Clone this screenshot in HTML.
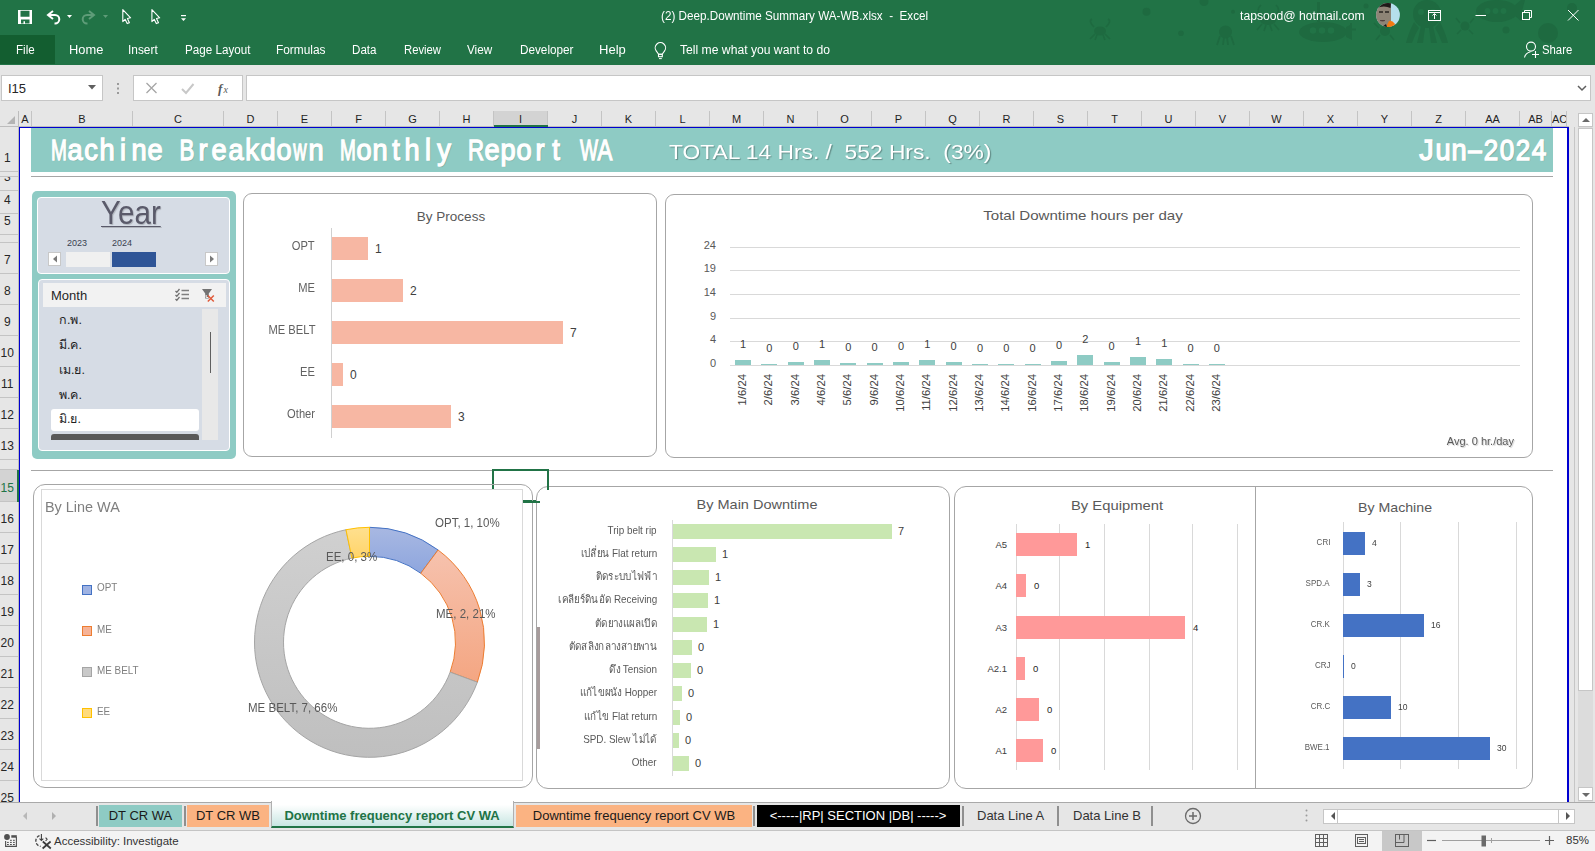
<!DOCTYPE html>
<html><head><meta charset="utf-8">
<style>
*{margin:0;padding:0;box-sizing:border-box}
html,body{width:1595px;height:851px;overflow:hidden;background:#fff;font-family:"Liberation Sans",sans-serif;position:relative}
.a{position:absolute}
.t{position:absolute;white-space:nowrap;line-height:1}
.tab{position:absolute;top:43.6px;font-size:12.5px;color:#fff;white-space:nowrap;line-height:1;transform:scaleX(0.92);transform-origin:0 0}
.ch{position:absolute;top:111px;height:16px;border-right:1px solid #c4c4c4;font-size:11px;color:#262626;text-align:center;line-height:17px;overflow:hidden}
.rh{position:absolute;left:0;width:18px;border-bottom:1px solid #c4c4c4;font-size:11px;color:#262626;text-align:center;overflow:hidden}
.lbl{position:absolute;white-space:nowrap;line-height:1;color:#595959}
</style></head><body>

<div class="a" style="left:0;top:0;width:1595px;height:65px;background:#217346"></div>
<svg class="a" style="left:1080px;top:0" width="515" height="65" viewBox="1080 0 515 65">
<g fill="#1e6a40" stroke="none">
<ellipse cx="1100" cy="31" rx="6" ry="4.5"/><path d="M1094 27 q-6 -6 -2 -8 M1106 27 q6 -6 2 -8 M1095 34 l-5 5 M1105 34 l5 5 M1097 35 l-2 5 M1103 35 l2 5" stroke="#1e6a40" stroke-width="1.6" fill="none"/>
<circle cx="1146.5" cy="11.7" r="4"/><circle cx="1204" cy="1.5" r="4.5"/><circle cx="1181" cy="33.3" r="2.8"/><circle cx="1233" cy="11.7" r="2"/>
<circle cx="1225.5" cy="32" r="6.5"/><path d="M1220 36 l-3 9 M1224 37 l-1 8 M1227 37 l1 8 M1231 36 l3 9" stroke="#1e6a40" stroke-width="1.8" fill="none"/>
<ellipse cx="1268" cy="20" rx="8" ry="5"/><path d="M1260 17 q-4 -8 1 -12 M1276 17 q5 -8 0 -12 M1262 24 l-5 6 M1274 24 l5 6 M1266 25 l-2 6 M1270 25 l2 6" stroke="#1e6a40" stroke-width="1.6" fill="none"/>
<ellipse cx="1323" cy="32" rx="24" ry="10"/><path d="M1317 22 v-20 h3 v20z"/><path d="M1346 27 v10 l6 3 v-16z"/><path d="M1351 23 v13 M1346 29.5 h10" stroke="#1e6a40" stroke-width="2" fill="none"/>
<circle cx="1385" cy="31" r="5"/><path d="M1379 28 l-5 -5 M1391 28 l5 -5 M1380 35 l-4 5 M1390 35 l4 5" stroke="#1e6a40" stroke-width="1.6" fill="none"/>
<circle cx="1427" cy="14" r="14"/><path d="M1414 22 q-6 12 -8 21 h6 q3 -9 7 -15z M1421 26 q-2 9 -4 17 h6 q1 -8 2 -15z M1433 26 q2 9 4 17 h-6 q-1 -8 -2 -15z M1440 22 q6 12 8 21 h-6 q-3 -9 -7 -15z"/>
<circle cx="1465" cy="26" r="4.5"/><path d="M1460 23 l-4 -5 M1470 23 l4 -5 M1461 30 l-4 4 M1469 30 l4 4" stroke="#1e6a40" stroke-width="1.5" fill="none"/>
<ellipse cx="1497" cy="11" rx="21" ry="11"/><path d="M1515 5 l6 -5 h4 l-3 11 l3 10 h-4 l-6 -5z"/>
<circle cx="1506" cy="30" r="3.5"/><circle cx="1548" cy="33" r="10"/><circle cx="1572" cy="8" r="5"/><circle cx="1366" cy="6" r="2.5"/>
</g>
<g fill="#217346"><circle cx="1313" cy="30.5" r="3.2"/><circle cx="1322" cy="30.5" r="3.2"/><circle cx="1331" cy="30.5" r="3.2"/>
<circle cx="1421" cy="12" r="3"/><circle cx="1433" cy="12" r="3"/><circle cx="1487.5" cy="11" r="3"/><circle cx="1495.5" cy="11" r="3"/><circle cx="1503.5" cy="11" r="3"/></g>
</svg>
<svg class="a" style="left:0;top:0" width="200" height="32" viewBox="0 0 200 32">
<path d="M18 10 h14 v14 h-14z M20.5 10.8 v6 h9 v-6z M21 19.5 v4 h2.5 v-2.2 h1.5 v2.2 h4.5 v-4z" fill="#fff" fill-rule="evenodd"/>
<path d="M53 11 l-5 4 l5 4" fill="none" stroke="#fff" stroke-width="2"/>
<path d="M48.5 15 h6.5 a4.3 4.3 0 0 1 0 8.6 h-0.5" fill="none" stroke="#fff" stroke-width="2"/>
<path d="M67 15 h5 l-2.5 3z" fill="#fff"/>
<path d="M89 11 l5 4 l-5 4" fill="none" stroke="#5e9c78" stroke-width="2"/>
<path d="M93.5 15 h-6.5 a4.3 4.3 0 0 0 0 8.6 h0.5" fill="none" stroke="#5e9c78" stroke-width="2"/>
<path d="M103 15 h5 l-2.5 3z" fill="#5e9c78"/>
<path d="M122.8 9.6 L122.8 21.6 L125.1 19.3 L127.2 23.6 L129.4 22.7 L127.4 18.5 L130.6 17.8 Z" fill="none" stroke="#fff" stroke-width="1.1" stroke-linejoin="round"/>
<path d="M151.9 9.6 L151.9 21.6 L154.2 19.3 L156.3 23.6 L158.5 22.7 L156.5 18.5 L159.7 17.8 Z" fill="none" stroke="#fff" stroke-width="1.1" stroke-linejoin="round"/>
<rect x="181" y="15" width="5" height="1.2" fill="#fff"/><path d="M181 18.2 h5 l-2.5 2.8z" fill="#fff"/>
</svg>
<div class="t" style="left:661px;top:10px;font-size:12.5px;color:#fff;transform:scaleX(0.935);transform-origin:0 0">(2) Deep.Downtime Summary WA-WB.xlsx&nbsp; -&nbsp; Excel</div>
<div class="t" style="left:1240px;top:10px;font-size:12.5px;color:#fff;transform:scaleX(0.973);transform-origin:0 0">tapsood@ hotmail.com</div>
<svg class="a" style="left:1376px;top:3px" width="24" height="24" viewBox="0 0 24 24">
<defs><clipPath id="av"><circle cx="12" cy="12" r="11.9"/></clipPath></defs>
<g clip-path="url(#av)"><rect width="24" height="24" fill="#b5dfec"/><path d="M0 0 h15 v24 h-15z" fill="#8e8476"/>
<path d="M0 0 h15 l-0.5 5 q-6 -3 -14.5 0z" fill="#1e1a18"/><path d="M3 9 h4 M9 9 h4" stroke="#2a2422" stroke-width="1.3"/>
<path d="M4 17.5 q3 1 5 0" stroke="#5a4040" stroke-width="1"/>
<path d="M10 24 l3 -6 q3 -1 6 3 l-1 3z" fill="#f27a12"/><path d="M6 24 l4 -3 l1 3z" fill="#1a1a1a"/></g></svg>
<svg class="a" style="left:1420px;top:0" width="175" height="32" viewBox="0 0 175 32">
<g fill="none" stroke="#fff" stroke-width="1">
<rect x="8.5" y="10.5" width="12" height="10"/><path d="M8.5 12.5 h12"/><path d="M14.5 19 v-5 M12.5 15.5 l2 -2 l2 2"/>
<path d="M55.5 15.5 h10.5"/>
<rect x="102.5" y="12.5" width="7" height="7"/><path d="M104.5 12.5 v-2 h7 v7 h-2"/>
<path d="M148 10 l10.5 10.5 M158.5 10 l-10.5 10.5"/>
</g></svg>
<div class="a" style="left:0;top:35px;width:55px;height:29px;background:#135e30"></div>
<div class="tab" style="left:15.5px;transform:scaleX(0.926)">File</div>
<div class="tab" style="left:68.5px;transform:scaleX(1.028)">Home</div>
<div class="tab" style="left:128.2px;transform:scaleX(0.950)">Insert</div>
<div class="tab" style="left:184.7px;transform:scaleX(0.932)">Page Layout</div>
<div class="tab" style="left:276.2px;transform:scaleX(0.951)">Formulas</div>
<div class="tab" style="left:352.4px;transform:scaleX(0.928)">Data</div>
<div class="tab" style="left:403.6px;transform:scaleX(0.903)">Review</div>
<div class="tab" style="left:466.8px;transform:scaleX(0.937)">View</div>
<div class="tab" style="left:519.5px;transform:scaleX(0.939)">Developer</div>
<div class="tab" style="left:599.0px;transform:scaleX(1.042)">Help</div>
<svg class="a" style="left:652px;top:40.8px" width="18" height="20" viewBox="0 0 18 20">
<path d="M6.6 13.3 L4.2 9.9 A5.2 5.2 0 1 1 12.6 9.9 L10.2 13.3 Z" fill="none" stroke="#fff" stroke-width="1.1" stroke-linejoin="round"/><rect x="6.5" y="13.3" width="3.8" height="2.4" fill="none" stroke="#fff" stroke-width="1.1"/><path d="M7 17.6 h2.8" stroke="#fff" stroke-width="1"/></svg>
<div class="tab" style="left:680.2px;transform:scaleX(0.972)">Tell me what you want to do</div>
<svg class="a" style="left:1522px;top:41px" width="20" height="18" viewBox="0 0 20 18">
<circle cx="9" cy="5.6" r="4.5" fill="none" stroke="#fff" stroke-width="1.1"/><path d="M2.5 16.5 q0.8 -4.5 6 -5.8" fill="none" stroke="#fff" stroke-width="1.1"/><path d="M13.5 10 v7 M10 13.5 h7" stroke="#fff" stroke-width="1.1"/></svg>
<div class="tab" style="left:1542.1px;transform:scaleX(0.906)">Share</div>
<div class="a" style="left:0;top:65px;width:1595px;height:46px;background:#e6e6e6"></div>
<div class="a" style="left:1px;top:75px;width:102px;height:26px;background:#fff;border:1px solid #c6c6c6"></div>
<div class="t" style="left:8px;top:82px;font-size:13px;color:#262626">I15</div>
<svg class="a" style="left:88px;top:85px" width="9" height="5"><path d="M0 0 h8 l-4 4.5z" fill="#5f5f5f"/></svg>
<svg class="a" style="left:117px;top:83px" width="3" height="13"><rect x="0" y="0" width="2" height="2" fill="#9a9a9a"/><rect x="0" y="4.5" width="2" height="2" fill="#9a9a9a"/><rect x="0" y="9" width="2" height="2" fill="#9a9a9a"/></svg>
<div class="a" style="left:133px;top:75px;width:110px;height:26px;background:#fff;border:1px solid #c6c6c6"></div>
<svg class="a" style="left:140px;top:78px" width="100" height="20" viewBox="0 0 100 20">
<path d="M6.5 5 l10 10 M16.5 5 l-10 10" stroke="#a6a6a6" stroke-width="1.3" fill="none"/>
<path d="M42 11 l4 4 l7.5 -9" stroke="#c8c8c8" stroke-width="2" fill="none"/>
<text x="78" y="15" font-family="Liberation Serif" font-style="italic" font-weight="bold" font-size="13" fill="#5a5a5a">f</text><text x="83.5" y="15" font-family="Liberation Serif" font-style="italic" font-size="10" fill="#5a5a5a">x</text>
</svg>
<div class="a" style="left:246px;top:75px;width:1345px;height:26px;background:#fff;border:1px solid #c6c6c6"></div>
<svg class="a" style="left:1577px;top:85px" width="10" height="7"><path d="M1 1 l4 4 l4 -4" stroke="#5f5f5f" stroke-width="1.5" fill="none"/></svg>
<div class="a" style="left:0;top:111px;width:1595px;height:16px;background:#e6e6e6"></div>
<svg class="a" style="left:6px;top:115px" width="10" height="10"><path d="M9 1 v8 h-8z" fill="#b4b4b4"/></svg>
<div class="a" style="left:19px;top:111px;width:13px;height:16px;overflow:hidden;border-right:1px solid #c4c4c4;"><div class="t" style="left:0;width:100%;text-align:center;top:2.8px;font-size:11px;color:#1f1f1f">A</div></div>
<div class="a" style="left:32px;top:111px;width:101px;height:16px;overflow:hidden;border-right:1px solid #c4c4c4;"><div class="t" style="left:0;width:100%;text-align:center;top:2.8px;font-size:11px;color:#1f1f1f">B</div></div>
<div class="a" style="left:133px;top:111px;width:91px;height:16px;overflow:hidden;border-right:1px solid #c4c4c4;"><div class="t" style="left:0;width:100%;text-align:center;top:2.8px;font-size:11px;color:#1f1f1f">C</div></div>
<div class="a" style="left:224px;top:111px;width:54px;height:16px;overflow:hidden;border-right:1px solid #c4c4c4;"><div class="t" style="left:0;width:100%;text-align:center;top:2.8px;font-size:11px;color:#1f1f1f">D</div></div>
<div class="a" style="left:278px;top:111px;width:54px;height:16px;overflow:hidden;border-right:1px solid #c4c4c4;"><div class="t" style="left:0;width:100%;text-align:center;top:2.8px;font-size:11px;color:#1f1f1f">E</div></div>
<div class="a" style="left:332px;top:111px;width:54px;height:16px;overflow:hidden;border-right:1px solid #c4c4c4;"><div class="t" style="left:0;width:100%;text-align:center;top:2.8px;font-size:11px;color:#1f1f1f">F</div></div>
<div class="a" style="left:386px;top:111px;width:54px;height:16px;overflow:hidden;border-right:1px solid #c4c4c4;"><div class="t" style="left:0;width:100%;text-align:center;top:2.8px;font-size:11px;color:#1f1f1f">G</div></div>
<div class="a" style="left:440px;top:111px;width:54px;height:16px;overflow:hidden;border-right:1px solid #c4c4c4;"><div class="t" style="left:0;width:100%;text-align:center;top:2.8px;font-size:11px;color:#1f1f1f">H</div></div>
<div class="a" style="left:494px;top:111px;width:54px;height:16px;overflow:hidden;border-right:1px solid #c4c4c4;background:#d3d3d3;"><div class="t" style="left:0;width:100%;text-align:center;top:2.8px;font-size:11px;color:#1f1f1f">I</div></div>
<div class="a" style="left:494px;top:125px;width:54px;height:2px;background:#217346;z-index:2"></div>
<div class="a" style="left:548px;top:111px;width:54px;height:16px;overflow:hidden;border-right:1px solid #c4c4c4;"><div class="t" style="left:0;width:100%;text-align:center;top:2.8px;font-size:11px;color:#1f1f1f">J</div></div>
<div class="a" style="left:602px;top:111px;width:54px;height:16px;overflow:hidden;border-right:1px solid #c4c4c4;"><div class="t" style="left:0;width:100%;text-align:center;top:2.8px;font-size:11px;color:#1f1f1f">K</div></div>
<div class="a" style="left:656px;top:111px;width:54px;height:16px;overflow:hidden;border-right:1px solid #c4c4c4;"><div class="t" style="left:0;width:100%;text-align:center;top:2.8px;font-size:11px;color:#1f1f1f">L</div></div>
<div class="a" style="left:710px;top:111px;width:54px;height:16px;overflow:hidden;border-right:1px solid #c4c4c4;"><div class="t" style="left:0;width:100%;text-align:center;top:2.8px;font-size:11px;color:#1f1f1f">M</div></div>
<div class="a" style="left:764px;top:111px;width:54px;height:16px;overflow:hidden;border-right:1px solid #c4c4c4;"><div class="t" style="left:0;width:100%;text-align:center;top:2.8px;font-size:11px;color:#1f1f1f">N</div></div>
<div class="a" style="left:818px;top:111px;width:54px;height:16px;overflow:hidden;border-right:1px solid #c4c4c4;"><div class="t" style="left:0;width:100%;text-align:center;top:2.8px;font-size:11px;color:#1f1f1f">O</div></div>
<div class="a" style="left:872px;top:111px;width:54px;height:16px;overflow:hidden;border-right:1px solid #c4c4c4;"><div class="t" style="left:0;width:100%;text-align:center;top:2.8px;font-size:11px;color:#1f1f1f">P</div></div>
<div class="a" style="left:926px;top:111px;width:54px;height:16px;overflow:hidden;border-right:1px solid #c4c4c4;"><div class="t" style="left:0;width:100%;text-align:center;top:2.8px;font-size:11px;color:#1f1f1f">Q</div></div>
<div class="a" style="left:980px;top:111px;width:54px;height:16px;overflow:hidden;border-right:1px solid #c4c4c4;"><div class="t" style="left:0;width:100%;text-align:center;top:2.8px;font-size:11px;color:#1f1f1f">R</div></div>
<div class="a" style="left:1034px;top:111px;width:54px;height:16px;overflow:hidden;border-right:1px solid #c4c4c4;"><div class="t" style="left:0;width:100%;text-align:center;top:2.8px;font-size:11px;color:#1f1f1f">S</div></div>
<div class="a" style="left:1088px;top:111px;width:54px;height:16px;overflow:hidden;border-right:1px solid #c4c4c4;"><div class="t" style="left:0;width:100%;text-align:center;top:2.8px;font-size:11px;color:#1f1f1f">T</div></div>
<div class="a" style="left:1142px;top:111px;width:54px;height:16px;overflow:hidden;border-right:1px solid #c4c4c4;"><div class="t" style="left:0;width:100%;text-align:center;top:2.8px;font-size:11px;color:#1f1f1f">U</div></div>
<div class="a" style="left:1196px;top:111px;width:54px;height:16px;overflow:hidden;border-right:1px solid #c4c4c4;"><div class="t" style="left:0;width:100%;text-align:center;top:2.8px;font-size:11px;color:#1f1f1f">V</div></div>
<div class="a" style="left:1250px;top:111px;width:54px;height:16px;overflow:hidden;border-right:1px solid #c4c4c4;"><div class="t" style="left:0;width:100%;text-align:center;top:2.8px;font-size:11px;color:#1f1f1f">W</div></div>
<div class="a" style="left:1304px;top:111px;width:54px;height:16px;overflow:hidden;border-right:1px solid #c4c4c4;"><div class="t" style="left:0;width:100%;text-align:center;top:2.8px;font-size:11px;color:#1f1f1f">X</div></div>
<div class="a" style="left:1358px;top:111px;width:54px;height:16px;overflow:hidden;border-right:1px solid #c4c4c4;"><div class="t" style="left:0;width:100%;text-align:center;top:2.8px;font-size:11px;color:#1f1f1f">Y</div></div>
<div class="a" style="left:1412px;top:111px;width:54px;height:16px;overflow:hidden;border-right:1px solid #c4c4c4;"><div class="t" style="left:0;width:100%;text-align:center;top:2.8px;font-size:11px;color:#1f1f1f">Z</div></div>
<div class="a" style="left:1466px;top:111px;width:54px;height:16px;overflow:hidden;border-right:1px solid #c4c4c4;"><div class="t" style="left:0;width:100%;text-align:center;top:2.8px;font-size:11px;color:#1f1f1f">AA</div></div>
<div class="a" style="left:1520px;top:111px;width:32px;height:16px;overflow:hidden;border-right:1px solid #c4c4c4;"><div class="t" style="left:0;width:100%;text-align:center;top:2.8px;font-size:11px;color:#1f1f1f">AB</div></div>
<div class="a" style="left:1552px;top:111px;width:15px;height:16px;overflow:hidden;border-right:1px solid #c4c4c4;"><div class="t" style="left:0;width:100%;text-align:center;top:2.8px;font-size:11px;color:#1f1f1f">AC</div></div>
<div class="a" style="left:0;top:127px;width:19px;height:675px;background:#e6e6e6"></div>
<div class="a" style="left:0;top:127px;width:18px;height:45px;overflow:hidden;border-bottom:1px solid #c4c4c4;"><div class="t" style="left:0;width:14.5px;text-align:center;top:25.0px;font-size:12px;color:#262626">1</div></div>
<div class="a" style="left:0;top:172px;width:18px;height:5px;overflow:hidden;border-bottom:1px solid #c4c4c4;"><div class="t" style="left:0;width:14.5px;text-align:center;top:-15.0px;font-size:12px;color:#262626"></div></div>
<div class="a" style="left:0;top:177px;width:18px;height:14px;overflow:hidden;border-bottom:1px solid #c4c4c4;"><div class="t" style="left:0;width:14.5px;text-align:center;top:-6.0px;font-size:12px;color:#262626">3</div></div>
<div class="a" style="left:0;top:191px;width:18px;height:23px;overflow:hidden;border-bottom:1px solid #c4c4c4;"><div class="t" style="left:0;width:14.5px;text-align:center;top:3.0px;font-size:12px;color:#262626">4</div></div>
<div class="a" style="left:0;top:214px;width:18px;height:21px;overflow:hidden;border-bottom:1px solid #c4c4c4;"><div class="t" style="left:0;width:14.5px;text-align:center;top:1.0px;font-size:12px;color:#262626">5</div></div>
<div class="a" style="left:0;top:235px;width:18px;height:8px;overflow:hidden;border-bottom:1px solid #c4c4c4;"><div class="t" style="left:0;width:14.5px;text-align:center;top:-12.0px;font-size:12px;color:#262626"></div></div>
<div class="a" style="left:0;top:243px;width:18px;height:31px;overflow:hidden;border-bottom:1px solid #c4c4c4;"><div class="t" style="left:0;width:14.5px;text-align:center;top:11.0px;font-size:12px;color:#262626">7</div></div>
<div class="a" style="left:0;top:274px;width:18px;height:31px;overflow:hidden;border-bottom:1px solid #c4c4c4;"><div class="t" style="left:0;width:14.5px;text-align:center;top:11.0px;font-size:12px;color:#262626">8</div></div>
<div class="a" style="left:0;top:305px;width:18px;height:31px;overflow:hidden;border-bottom:1px solid #c4c4c4;"><div class="t" style="left:0;width:14.5px;text-align:center;top:11.0px;font-size:12px;color:#262626">9</div></div>
<div class="a" style="left:0;top:336px;width:18px;height:31px;overflow:hidden;border-bottom:1px solid #c4c4c4;"><div class="t" style="left:0;width:14.5px;text-align:center;top:11.0px;font-size:12px;color:#262626">10</div></div>
<div class="a" style="left:0;top:367px;width:18px;height:31px;overflow:hidden;border-bottom:1px solid #c4c4c4;"><div class="t" style="left:0;width:14.5px;text-align:center;top:11.0px;font-size:12px;color:#262626">11</div></div>
<div class="a" style="left:0;top:398px;width:18px;height:31px;overflow:hidden;border-bottom:1px solid #c4c4c4;"><div class="t" style="left:0;width:14.5px;text-align:center;top:11.0px;font-size:12px;color:#262626">12</div></div>
<div class="a" style="left:0;top:429px;width:18px;height:31px;overflow:hidden;border-bottom:1px solid #c4c4c4;"><div class="t" style="left:0;width:14.5px;text-align:center;top:11.0px;font-size:12px;color:#262626">13</div></div>
<div class="a" style="left:0;top:460px;width:18px;height:10px;overflow:hidden;border-bottom:1px solid #c4c4c4;"><div class="t" style="left:0;width:14.5px;text-align:center;top:-10.0px;font-size:12px;color:#262626">14</div></div>
<div class="a" style="left:0;top:470px;width:18px;height:32px;overflow:hidden;border-bottom:1px solid #c4c4c4;background:#d3d3d3;"><div class="t" style="left:0;width:14.5px;text-align:center;top:12.0px;font-size:12px;color:#217346">15</div></div>
<div class="a" style="left:17px;top:470px;width:2px;height:32px;background:#217346;z-index:2"></div>
<div class="a" style="left:0;top:502px;width:18px;height:31px;overflow:hidden;border-bottom:1px solid #c4c4c4;"><div class="t" style="left:0;width:14.5px;text-align:center;top:11.0px;font-size:12px;color:#262626">16</div></div>
<div class="a" style="left:0;top:533px;width:18px;height:31px;overflow:hidden;border-bottom:1px solid #c4c4c4;"><div class="t" style="left:0;width:14.5px;text-align:center;top:11.0px;font-size:12px;color:#262626">17</div></div>
<div class="a" style="left:0;top:564px;width:18px;height:31px;overflow:hidden;border-bottom:1px solid #c4c4c4;"><div class="t" style="left:0;width:14.5px;text-align:center;top:11.0px;font-size:12px;color:#262626">18</div></div>
<div class="a" style="left:0;top:595px;width:18px;height:31px;overflow:hidden;border-bottom:1px solid #c4c4c4;"><div class="t" style="left:0;width:14.5px;text-align:center;top:11.0px;font-size:12px;color:#262626">19</div></div>
<div class="a" style="left:0;top:626px;width:18px;height:31px;overflow:hidden;border-bottom:1px solid #c4c4c4;"><div class="t" style="left:0;width:14.5px;text-align:center;top:11.0px;font-size:12px;color:#262626">20</div></div>
<div class="a" style="left:0;top:657px;width:18px;height:31px;overflow:hidden;border-bottom:1px solid #c4c4c4;"><div class="t" style="left:0;width:14.5px;text-align:center;top:11.0px;font-size:12px;color:#262626">21</div></div>
<div class="a" style="left:0;top:688px;width:18px;height:31px;overflow:hidden;border-bottom:1px solid #c4c4c4;"><div class="t" style="left:0;width:14.5px;text-align:center;top:11.0px;font-size:12px;color:#262626">22</div></div>
<div class="a" style="left:0;top:719px;width:18px;height:31px;overflow:hidden;border-bottom:1px solid #c4c4c4;"><div class="t" style="left:0;width:14.5px;text-align:center;top:11.0px;font-size:12px;color:#262626">23</div></div>
<div class="a" style="left:0;top:750px;width:18px;height:31px;overflow:hidden;border-bottom:1px solid #c4c4c4;"><div class="t" style="left:0;width:14.5px;text-align:center;top:11.0px;font-size:12px;color:#262626">24</div></div>
<div class="a" style="left:0;top:781px;width:18px;height:21px;overflow:hidden;"><div class="t" style="left:0;width:14.5px;text-align:center;top:11.0px;font-size:12px;color:#262626">25</div></div>
<div class="a" style="left:1569px;top:111px;width:26px;height:691px;background:#e6e6e6"></div>
<div class="a" style="left:1574px;top:127px;width:1px;height:675px;background:#c6c6c6"></div>
<div class="a" style="left:1578px;top:113px;width:15px;height:689px;background:#dcdcdc"></div>
<div class="a" style="left:1578px;top:128px;width:15px;height:563px;background:#fff;border:1px solid #c6c6c6"></div>
<div class="a" style="left:1578px;top:113px;width:15px;height:14px;background:#fff;border:1px solid #c6c6c6"></div>
<svg class="a" style="left:1581px;top:116px" width="10" height="8"><path d="M1 6 h8 l-4 -4z" fill="#6a6a6a"/></svg>
<div class="a" style="left:1578px;top:787px;width:15px;height:14px;background:#fff;border:1px solid #c6c6c6"></div>
<svg class="a" style="left:1581px;top:791px" width="10" height="8"><path d="M1 2 h8 l-4 4z" fill="#6a6a6a"/></svg>
<div class="a" style="left:0;top:126px;width:1569px;height:1px;background:#bdbdbd"></div>
<div class="a" style="left:18px;top:111px;width:1px;height:691px;background:#bdbdbd"></div>
<div class="a" style="left:19px;top:127px;width:1550px;height:676px;border:1px solid #0000d0;border-right-width:2px;border-bottom:none"></div>
<div class="a" style="left:31px;top:128px;width:1522px;height:44px;background:#8ecbc4"></div>
<div class="a" style="left:31px;top:176px;width:1522px;height:1px;background:#a6a6a6"></div>
<div class="a" style="left:31px;top:470px;width:1522px;height:1px;background:#a6a6a6"></div>
<div class="t" style="left:51px;top:136.2px;font-size:29px;color:#fff;-webkit-text-stroke:1.3px #fff;text-shadow:1px 1px 1px rgba(0,0,0,.2);"><span style="display:inline-block;position:relative;width:16.06px;height:1em"><span style="position:absolute;left:50%;top:0;transform:translateX(-50%) scaleX(0.66)">M</span></span><span style="display:inline-block;position:relative;width:16.06px;height:1em"><span style="position:absolute;left:50%;top:0;transform:translateX(-50%) scaleX(0.94)">a</span></span><span style="display:inline-block;position:relative;width:16.06px;height:1em"><span style="position:absolute;left:50%;top:0;transform:translateX(-50%) scaleX(0.94)">c</span></span><span style="display:inline-block;position:relative;width:16.06px;height:1em"><span style="position:absolute;left:50%;top:0;transform:translateX(-50%) scaleX(0.94)">h</span></span><span style="display:inline-block;position:relative;width:16.06px;height:1em"><span style="position:absolute;left:50%;top:0;transform:translateX(-50%) scaleX(0.94)">i</span></span><span style="display:inline-block;position:relative;width:16.06px;height:1em"><span style="position:absolute;left:50%;top:0;transform:translateX(-50%) scaleX(0.94)">n</span></span><span style="display:inline-block;position:relative;width:16.06px;height:1em"><span style="position:absolute;left:50%;top:0;transform:translateX(-50%) scaleX(0.94)">e</span></span><span style="display:inline-block;position:relative;width:16.06px;height:1em"><span style="position:absolute;left:50%;top:0;transform:translateX(-50%) scaleX(0.75)">&nbsp;</span></span><span style="display:inline-block;position:relative;width:16.06px;height:1em"><span style="position:absolute;left:50%;top:0;transform:translateX(-50%) scaleX(0.77)">B</span></span><span style="display:inline-block;position:relative;width:16.06px;height:1em"><span style="position:absolute;left:50%;top:0;transform:translateX(-50%) scaleX(0.94)">r</span></span><span style="display:inline-block;position:relative;width:16.06px;height:1em"><span style="position:absolute;left:50%;top:0;transform:translateX(-50%) scaleX(0.94)">e</span></span><span style="display:inline-block;position:relative;width:16.06px;height:1em"><span style="position:absolute;left:50%;top:0;transform:translateX(-50%) scaleX(0.94)">a</span></span><span style="display:inline-block;position:relative;width:16.06px;height:1em"><span style="position:absolute;left:50%;top:0;transform:translateX(-50%) scaleX(0.94)">k</span></span><span style="display:inline-block;position:relative;width:16.06px;height:1em"><span style="position:absolute;left:50%;top:0;transform:translateX(-50%) scaleX(0.94)">d</span></span><span style="display:inline-block;position:relative;width:16.06px;height:1em"><span style="position:absolute;left:50%;top:0;transform:translateX(-50%) scaleX(0.94)">o</span></span><span style="display:inline-block;position:relative;width:16.06px;height:1em"><span style="position:absolute;left:50%;top:0;transform:translateX(-50%) scaleX(0.64)">w</span></span><span style="display:inline-block;position:relative;width:16.06px;height:1em"><span style="position:absolute;left:50%;top:0;transform:translateX(-50%) scaleX(0.94)">n</span></span><span style="display:inline-block;position:relative;width:16.06px;height:1em"><span style="position:absolute;left:50%;top:0;transform:translateX(-50%) scaleX(0.75)">&nbsp;</span></span><span style="display:inline-block;position:relative;width:16.06px;height:1em"><span style="position:absolute;left:50%;top:0;transform:translateX(-50%) scaleX(0.66)">M</span></span><span style="display:inline-block;position:relative;width:16.06px;height:1em"><span style="position:absolute;left:50%;top:0;transform:translateX(-50%) scaleX(0.94)">o</span></span><span style="display:inline-block;position:relative;width:16.06px;height:1em"><span style="position:absolute;left:50%;top:0;transform:translateX(-50%) scaleX(0.94)">n</span></span><span style="display:inline-block;position:relative;width:16.06px;height:1em"><span style="position:absolute;left:50%;top:0;transform:translateX(-50%) scaleX(0.94)">t</span></span><span style="display:inline-block;position:relative;width:16.06px;height:1em"><span style="position:absolute;left:50%;top:0;transform:translateX(-50%) scaleX(0.94)">h</span></span><span style="display:inline-block;position:relative;width:16.06px;height:1em"><span style="position:absolute;left:50%;top:0;transform:translateX(-50%) scaleX(0.94)">l</span></span><span style="display:inline-block;position:relative;width:16.06px;height:1em"><span style="position:absolute;left:50%;top:0;transform:translateX(-50%) scaleX(0.94)">y</span></span><span style="display:inline-block;position:relative;width:16.06px;height:1em"><span style="position:absolute;left:50%;top:0;transform:translateX(-50%) scaleX(0.75)">&nbsp;</span></span><span style="display:inline-block;position:relative;width:16.06px;height:1em"><span style="position:absolute;left:50%;top:0;transform:translateX(-50%) scaleX(0.77)">R</span></span><span style="display:inline-block;position:relative;width:16.06px;height:1em"><span style="position:absolute;left:50%;top:0;transform:translateX(-50%) scaleX(0.94)">e</span></span><span style="display:inline-block;position:relative;width:16.06px;height:1em"><span style="position:absolute;left:50%;top:0;transform:translateX(-50%) scaleX(0.94)">p</span></span><span style="display:inline-block;position:relative;width:16.06px;height:1em"><span style="position:absolute;left:50%;top:0;transform:translateX(-50%) scaleX(0.94)">o</span></span><span style="display:inline-block;position:relative;width:16.06px;height:1em"><span style="position:absolute;left:50%;top:0;transform:translateX(-50%) scaleX(0.94)">r</span></span><span style="display:inline-block;position:relative;width:16.06px;height:1em"><span style="position:absolute;left:50%;top:0;transform:translateX(-50%) scaleX(0.94)">t</span></span><span style="display:inline-block;position:relative;width:16.06px;height:1em"><span style="position:absolute;left:50%;top:0;transform:translateX(-50%) scaleX(0.75)">&nbsp;</span></span><span style="display:inline-block;position:relative;width:16.06px;height:1em"><span style="position:absolute;left:50%;top:0;transform:translateX(-50%) scaleX(0.66)">W</span></span><span style="display:inline-block;position:relative;width:16.06px;height:1em"><span style="position:absolute;left:50%;top:0;transform:translateX(-50%) scaleX(0.77)">A</span></span></div>
<div class="t" id="ttl2" style="left:669px;top:141.2px;font-size:21px;color:#fff;text-shadow:1px 1px 1px rgba(0,0,0,.3);transform:scaleX(1.085);transform-origin:0 0">TOTAL 14 Hrs. /&nbsp; 552 Hrs.&nbsp; (3%)</div>
<div class="t" style="left:1418.5px;top:136.2px;font-size:29px;color:#fff;-webkit-text-stroke:1.3px #fff;text-shadow:1px 1px 1px rgba(0,0,0,.2);"><span style="display:inline-block;position:relative;width:16.06px;height:1em"><span style="position:absolute;left:50%;top:0;transform:translateX(-50%) scaleX(1.0)">J</span></span><span style="display:inline-block;position:relative;width:16.06px;height:1em"><span style="position:absolute;left:50%;top:0;transform:translateX(-50%) scaleX(0.94)">u</span></span><span style="display:inline-block;position:relative;width:16.06px;height:1em"><span style="position:absolute;left:50%;top:0;transform:translateX(-50%) scaleX(0.94)">n</span></span><span style="display:inline-block;position:relative;width:16.06px;height:1em"><span style="position:absolute;left:50%;top:0;transform:translateX(-50%) scaleX(0.48)">—</span></span><span style="display:inline-block;position:relative;width:16.06px;height:1em"><span style="position:absolute;left:50%;top:0;transform:translateX(-50%) scaleX(0.9)">2</span></span><span style="display:inline-block;position:relative;width:16.06px;height:1em"><span style="position:absolute;left:50%;top:0;transform:translateX(-50%) scaleX(0.9)">0</span></span><span style="display:inline-block;position:relative;width:16.06px;height:1em"><span style="position:absolute;left:50%;top:0;transform:translateX(-50%) scaleX(0.9)">2</span></span><span style="display:inline-block;position:relative;width:16.06px;height:1em"><span style="position:absolute;left:50%;top:0;transform:translateX(-50%) scaleX(0.9)">4</span></span></div>
<div class="a" style="left:32px;top:191px;width:204px;height:268px;background:#8ecbc4;border-radius:5px"></div>
<div class="a" style="left:37px;top:197px;width:193px;height:77px;background:#d6dce5;border:1px solid #fff;border-radius:4px"></div>
<div class="t" style="left:101px;top:196.5px;font-size:32.5px;color:#5a5a6a;text-decoration:underline;text-decoration-thickness:1px;text-underline-offset:2px;text-shadow:1px 1px 1px rgba(0,0,0,.18);transform:scaleX(0.91);transform-origin:0 0">Year</div>
<div class="t" style="left:67px;top:239px;font-size:9px;color:#3a4250">2023</div>
<div class="t" style="left:112px;top:239px;font-size:9px;color:#3a4250">2024</div>
<div class="a" style="left:48px;top:252px;width:13px;height:14px;background:#fff;border:1px solid #c8c8c8"></div>
<svg class="a" style="left:51px;top:255px" width="8" height="8"><path d="M6 0.5 v7 l-4 -3.5z" fill="#7a7a7a"/></svg>
<div class="a" style="left:66px;top:252px;width:44px;height:15px;background:#f0f0f0"></div>
<div class="a" style="left:112px;top:252px;width:44px;height:15px;background:#2f5597"></div>
<div class="a" style="left:205px;top:252px;width:13px;height:14px;background:#fff;border:1px solid #c8c8c8"></div>
<svg class="a" style="left:208px;top:255px" width="8" height="8"><path d="M2 0.5 v7 l4 -3.5z" fill="#7a7a7a"/></svg>
<div class="a" style="left:38px;top:279px;width:192px;height:172px;background:#d6dce5;border:1px solid #fff;border-radius:4px"></div>
<div class="a" style="left:43px;top:283px;width:183px;height:24px;background:#f2f2f2"></div>
<div class="t" style="left:51px;top:288.5px;font-size:13px;color:#262626">Month</div>
<svg class="a" style="left:172px;top:286px" width="50" height="18" viewBox="0 0 50 18">
<path d="M3.5 5 l1.3 1.3 l2.7 -3.3 M3.5 9 l1.3 1.3 l2.7 -3.3 M3.5 13 l1.3 1.3 l2.7 -3.3" stroke="#6f6f6f" stroke-width="1.3" fill="none"/>
<path d="M9.5 4.5 h7.5 M9.5 8.5 h7.5 M9.5 12.5 h7.5" stroke="#7f7f7f" stroke-width="1.3"/>
<path d="M30 3 h10 l-3.2 4.5 v5 h-3.6 v-5z" fill="#737373"/><path d="M34.2 9 v2.5 h2" stroke="#f2f2f2" stroke-width="1" fill="none"/>
<path d="M35.8 9.5 l6 6 M41.8 9.5 l-6 6" stroke="#e05a3a" stroke-width="1.5"/>
</svg>
<div class="t" style="left:59px;top:313.5px;font-size:12.5px;color:#1f1f1f">ก.พ.</div>
<div class="t" style="left:59px;top:338.5px;font-size:12.5px;color:#1f1f1f">มี.ค.</div>
<div class="t" style="left:59px;top:363.6px;font-size:12.5px;color:#1f1f1f">เม.ย.</div>
<div class="t" style="left:59px;top:388.8px;font-size:12.5px;color:#1f1f1f">พ.ค.</div>
<div class="a" style="left:51px;top:409px;width:148px;height:22px;background:#fff;border-radius:3px"></div>
<div class="t" style="left:59px;top:413px;font-size:12.5px;color:#1f1f1f">มิ.ย.</div>
<div class="a" style="left:51px;top:434px;width:148px;height:6px;background:#595959;border-radius:3px 3px 0 0"></div>
<div class="a" style="left:202px;top:309px;width:16px;height:131px;background:#e8e8e8"></div>
<div class="a" style="left:210px;top:332px;width:1px;height:41px;background:#5f5f5f"></div>
<div class="a" style="left:243px;top:193px;width:414px;height:264px;border:1px solid #a6a6a6;border-radius:9px;background:#fff;"></div>
<div class="t" style="left:451px;top:210px;font-size:13.5px;color:#595959;transform:translateX(-50%)">By Process</div>
<div class="a" style="left:331px;top:228px;width:1px;height:210px;background:#d0d0d0"></div>
<div class="a" style="left:332px;top:237px;width:36px;height:23px;background:#f7b7a3"></div>
<div class="lbl" style="right:1280px;top:240px;font-size:12px;color:#626262;transform:scaleX(0.93);transform-origin:100% 0">OPT</div>
<div class="lbl" style="left:375px;top:243px;font-size:12px;color:#404040">1</div>
<div class="a" style="left:332px;top:279px;width:71px;height:23px;background:#f7b7a3"></div>
<div class="lbl" style="right:1280px;top:282px;font-size:12px;color:#626262;transform:scaleX(0.93);transform-origin:100% 0">ME</div>
<div class="lbl" style="left:410px;top:285px;font-size:12px;color:#404040">2</div>
<div class="a" style="left:332px;top:321px;width:231px;height:23px;background:#f7b7a3"></div>
<div class="lbl" style="right:1280px;top:324px;font-size:12px;color:#626262;transform:scaleX(0.93);transform-origin:100% 0">ME BELT</div>
<div class="lbl" style="left:570px;top:327px;font-size:12px;color:#404040">7</div>
<div class="a" style="left:332px;top:363px;width:11px;height:23px;background:#f7b7a3"></div>
<div class="lbl" style="right:1280px;top:366px;font-size:12px;color:#626262;transform:scaleX(0.93);transform-origin:100% 0">EE</div>
<div class="lbl" style="left:350px;top:369px;font-size:12px;color:#404040">0</div>
<div class="a" style="left:332px;top:405px;width:119px;height:23px;background:#f7b7a3"></div>
<div class="lbl" style="right:1280px;top:408px;font-size:12px;color:#626262;transform:scaleX(0.93);transform-origin:100% 0">Other</div>
<div class="lbl" style="left:458px;top:411px;font-size:12px;color:#404040">3</div>
<div class="a" style="left:665px;top:194px;width:868px;height:264px;border:1px solid #a6a6a6;border-radius:9px;background:#fff;"></div>
<div class="t" style="left:1083px;top:208.5px;font-size:13.5px;color:#595959;transform:translateX(-50%) scaleX(1.117)">Total Downtime hours per day</div>
<div class="a" style="left:730px;top:247px;width:790px;height:1px;background:#d9d9d9"></div>
<div class="lbl" style="right:879px;top:240px;font-size:11px">24</div>
<div class="a" style="left:730px;top:270px;width:790px;height:1px;background:#d9d9d9"></div>
<div class="lbl" style="right:879px;top:263px;font-size:11px">19</div>
<div class="a" style="left:730px;top:294px;width:790px;height:1px;background:#d9d9d9"></div>
<div class="lbl" style="right:879px;top:287px;font-size:11px">14</div>
<div class="a" style="left:730px;top:318px;width:790px;height:1px;background:#d9d9d9"></div>
<div class="lbl" style="right:879px;top:311px;font-size:11px">9</div>
<div class="a" style="left:730px;top:341px;width:790px;height:1px;background:#d9d9d9"></div>
<div class="lbl" style="right:879px;top:334px;font-size:11px">4</div>
<div class="a" style="left:730px;top:365px;width:790px;height:1px;background:#d9d9d9"></div>
<div class="lbl" style="right:879px;top:358px;font-size:11px">0</div>
<div class="a" style="left:735px;top:360px;width:16px;height:5px;background:#8ecbc4"></div>
<div class="lbl" style="left:743.0px;top:339px;font-size:11px;color:#404040;transform:translateX(-50%)">1</div>
<div class="lbl" style="left:743.0px;top:374px;font-size:11.3px;color:#404040;transform-origin:0 0;transform:rotate(-90deg) translate(-100%,-50%)">1/6/24</div>
<div class="a" style="left:761px;top:364px;width:16px;height:1px;background:#8ecbc4"></div>
<div class="lbl" style="left:769.3px;top:343px;font-size:11px;color:#404040;transform:translateX(-50%)">0</div>
<div class="lbl" style="left:769.3px;top:374px;font-size:11.3px;color:#404040;transform-origin:0 0;transform:rotate(-90deg) translate(-100%,-50%)">2/6/24</div>
<div class="a" style="left:788px;top:362px;width:16px;height:3px;background:#8ecbc4"></div>
<div class="lbl" style="left:795.7px;top:341px;font-size:11px;color:#404040;transform:translateX(-50%)">0</div>
<div class="lbl" style="left:795.7px;top:374px;font-size:11.3px;color:#404040;transform-origin:0 0;transform:rotate(-90deg) translate(-100%,-50%)">3/6/24</div>
<div class="a" style="left:814px;top:360px;width:16px;height:5px;background:#8ecbc4"></div>
<div class="lbl" style="left:822.0px;top:339px;font-size:11px;color:#404040;transform:translateX(-50%)">1</div>
<div class="lbl" style="left:822.0px;top:374px;font-size:11.3px;color:#404040;transform-origin:0 0;transform:rotate(-90deg) translate(-100%,-50%)">4/6/24</div>
<div class="a" style="left:840px;top:363px;width:16px;height:2px;background:#8ecbc4"></div>
<div class="lbl" style="left:848.3px;top:342px;font-size:11px;color:#404040;transform:translateX(-50%)">0</div>
<div class="lbl" style="left:848.3px;top:374px;font-size:11.3px;color:#404040;transform-origin:0 0;transform:rotate(-90deg) translate(-100%,-50%)">5/6/24</div>
<div class="a" style="left:867px;top:363px;width:16px;height:2px;background:#8ecbc4"></div>
<div class="lbl" style="left:874.6px;top:342px;font-size:11px;color:#404040;transform:translateX(-50%)">0</div>
<div class="lbl" style="left:874.6px;top:374px;font-size:11.3px;color:#404040;transform-origin:0 0;transform:rotate(-90deg) translate(-100%,-50%)">9/6/24</div>
<div class="a" style="left:893px;top:362px;width:16px;height:3px;background:#8ecbc4"></div>
<div class="lbl" style="left:901.0px;top:341px;font-size:11px;color:#404040;transform:translateX(-50%)">0</div>
<div class="lbl" style="left:901.0px;top:374px;font-size:11.3px;color:#404040;transform-origin:0 0;transform:rotate(-90deg) translate(-100%,-50%)">10/6/24</div>
<div class="a" style="left:919px;top:360px;width:16px;height:5px;background:#8ecbc4"></div>
<div class="lbl" style="left:927.3px;top:339px;font-size:11px;color:#404040;transform:translateX(-50%)">1</div>
<div class="lbl" style="left:927.3px;top:374px;font-size:11.3px;color:#404040;transform-origin:0 0;transform:rotate(-90deg) translate(-100%,-50%)">11/6/24</div>
<div class="a" style="left:946px;top:362px;width:16px;height:3px;background:#8ecbc4"></div>
<div class="lbl" style="left:953.6px;top:341px;font-size:11px;color:#404040;transform:translateX(-50%)">0</div>
<div class="lbl" style="left:953.6px;top:374px;font-size:11.3px;color:#404040;transform-origin:0 0;transform:rotate(-90deg) translate(-100%,-50%)">12/6/24</div>
<div class="a" style="left:972px;top:364px;width:16px;height:1px;background:#8ecbc4"></div>
<div class="lbl" style="left:980.0px;top:343px;font-size:11px;color:#404040;transform:translateX(-50%)">0</div>
<div class="lbl" style="left:980.0px;top:374px;font-size:11.3px;color:#404040;transform-origin:0 0;transform:rotate(-90deg) translate(-100%,-50%)">13/6/24</div>
<div class="a" style="left:998px;top:364px;width:16px;height:1px;background:#8ecbc4"></div>
<div class="lbl" style="left:1006.3px;top:343px;font-size:11px;color:#404040;transform:translateX(-50%)">0</div>
<div class="lbl" style="left:1006.3px;top:374px;font-size:11.3px;color:#404040;transform-origin:0 0;transform:rotate(-90deg) translate(-100%,-50%)">14/6/24</div>
<div class="a" style="left:1025px;top:364px;width:16px;height:1px;background:#8ecbc4"></div>
<div class="lbl" style="left:1032.6px;top:343px;font-size:11px;color:#404040;transform:translateX(-50%)">0</div>
<div class="lbl" style="left:1032.6px;top:374px;font-size:11.3px;color:#404040;transform-origin:0 0;transform:rotate(-90deg) translate(-100%,-50%)">16/6/24</div>
<div class="a" style="left:1051px;top:361px;width:16px;height:4px;background:#8ecbc4"></div>
<div class="lbl" style="left:1059.0px;top:340px;font-size:11px;color:#404040;transform:translateX(-50%)">0</div>
<div class="lbl" style="left:1059.0px;top:374px;font-size:11.3px;color:#404040;transform-origin:0 0;transform:rotate(-90deg) translate(-100%,-50%)">17/6/24</div>
<div class="a" style="left:1077px;top:355px;width:16px;height:10px;background:#8ecbc4"></div>
<div class="lbl" style="left:1085.3px;top:334px;font-size:11px;color:#404040;transform:translateX(-50%)">2</div>
<div class="lbl" style="left:1085.3px;top:374px;font-size:11.3px;color:#404040;transform-origin:0 0;transform:rotate(-90deg) translate(-100%,-50%)">18/6/24</div>
<div class="a" style="left:1104px;top:362px;width:16px;height:3px;background:#8ecbc4"></div>
<div class="lbl" style="left:1111.6px;top:341px;font-size:11px;color:#404040;transform:translateX(-50%)">0</div>
<div class="lbl" style="left:1111.6px;top:374px;font-size:11.3px;color:#404040;transform-origin:0 0;transform:rotate(-90deg) translate(-100%,-50%)">19/6/24</div>
<div class="a" style="left:1130px;top:357px;width:16px;height:8px;background:#8ecbc4"></div>
<div class="lbl" style="left:1138.0px;top:336px;font-size:11px;color:#404040;transform:translateX(-50%)">1</div>
<div class="lbl" style="left:1138.0px;top:374px;font-size:11.3px;color:#404040;transform-origin:0 0;transform:rotate(-90deg) translate(-100%,-50%)">20/6/24</div>
<div class="a" style="left:1156px;top:359px;width:16px;height:6px;background:#8ecbc4"></div>
<div class="lbl" style="left:1164.3px;top:338px;font-size:11px;color:#404040;transform:translateX(-50%)">1</div>
<div class="lbl" style="left:1164.3px;top:374px;font-size:11.3px;color:#404040;transform-origin:0 0;transform:rotate(-90deg) translate(-100%,-50%)">21/6/24</div>
<div class="a" style="left:1183px;top:364px;width:16px;height:1px;background:#8ecbc4"></div>
<div class="lbl" style="left:1190.6px;top:343px;font-size:11px;color:#404040;transform:translateX(-50%)">0</div>
<div class="lbl" style="left:1190.6px;top:374px;font-size:11.3px;color:#404040;transform-origin:0 0;transform:rotate(-90deg) translate(-100%,-50%)">22/6/24</div>
<div class="a" style="left:1209px;top:364px;width:16px;height:1px;background:#8ecbc4"></div>
<div class="lbl" style="left:1216.9px;top:343px;font-size:11px;color:#404040;transform:translateX(-50%)">0</div>
<div class="lbl" style="left:1216.9px;top:374px;font-size:11.3px;color:#404040;transform-origin:0 0;transform:rotate(-90deg) translate(-100%,-50%)">23/6/24</div>
<div class="lbl" style="right:81px;top:435.5px;font-size:10.5px;color:#595959;text-shadow:1px 1px 1px rgba(0,0,0,.2);transform:scaleX(1.05);transform-origin:100% 0">Avg. 0 hr./day</div>
<div class="a" style="left:492px;top:469px;width:57px;height:33px;border:2px solid #217346"></div>
<div class="a" style="left:33px;top:484px;width:500px;height:304px;border:1px solid #a6a6a6;border-radius:12px"></div>
<div class="a" style="left:41px;top:489px;width:482px;height:292px;border:1px solid #d9d9d9;background:#fff"></div>
<div class="t" style="left:45px;top:500px;font-size:14px;color:#7f7f7f;transform:scaleX(1.03);transform-origin:0 0">By Line WA</div>
<div class="a" style="left:82px;top:585px;width:10px;height:10px;background:#9fb3e3;border:1px solid #4472c4"></div>
<div class="lbl" style="left:97px;top:582px;font-size:10.5px;color:#7f7f7f;transform:scaleX(0.94);transform-origin:0 0">OPT</div>
<div class="a" style="left:82px;top:626px;width:10px;height:10px;background:#f6b397;border:1px solid #ed7d31"></div>
<div class="lbl" style="left:97px;top:624px;font-size:10.5px;color:#7f7f7f;transform:scaleX(0.94);transform-origin:0 0">ME</div>
<div class="a" style="left:82px;top:667px;width:10px;height:10px;background:#c9c9c9;border:1px solid #a5a5a5"></div>
<div class="lbl" style="left:97px;top:664.5px;font-size:10.5px;color:#7f7f7f;transform:scaleX(0.94);transform-origin:0 0">ME BELT</div>
<div class="a" style="left:82px;top:708px;width:10px;height:10px;background:#ffdb7d;border:1px solid #ffc000"></div>
<div class="lbl" style="left:97px;top:706px;font-size:10.5px;color:#7f7f7f;transform:scaleX(0.94);transform-origin:0 0">EE</div>
<svg class="a" style="left:300px;top:520px" width="150" height="250" viewBox="0 0 150 250" overflow="visible"><defs><linearGradient id="gopt" x1="0" y1="0" x2="0" y2="1"><stop offset="0" stop-color="#a8b8e2"/><stop offset="1" stop-color="#8ea6de"/></linearGradient><linearGradient id="gme" x1="0" y1="0" x2="0" y2="1"><stop offset="0" stop-color="#f6c2ae"/><stop offset="1" stop-color="#f4a682"/></linearGradient><linearGradient id="gbelt" x1="0" y1="0" x2="0" y2="1"><stop offset="0" stop-color="#d0d0d0"/><stop offset="1" stop-color="#bfbfbf"/></linearGradient><linearGradient id="gee" x1="0" y1="0" x2="0" y2="1"><stop offset="0" stop-color="#ffe08f"/><stop offset="1" stop-color="#ffd46a"/></linearGradient></defs><path d="M69.50 7.30 A115 115 0 0 1 138.07 29.98 L120.78 53.26 A86 86 0 0 0 69.50 36.30Z" fill="url(#gopt)" stroke="#4472c4" stroke-width="1"/><path d="M138.07 29.98 A115 115 0 0 1 177.36 162.20 L150.16 152.14 A86 86 0 0 0 120.78 53.26Z" fill="url(#gme)" stroke="#ed7d31" stroke-width="1"/><path d="M177.36 162.20 A115 115 0 1 1 45.98 9.73 L51.91 38.12 A86 86 0 1 0 150.16 152.14Z" fill="url(#gbelt)" stroke="#a5a5a5" stroke-width="1"/><path d="M45.98 9.73 A115 115 0 0 1 69.50 7.30 L69.50 36.30 A86 86 0 0 0 51.91 38.12Z" fill="url(#gee)" stroke="#ffc000" stroke-width="1"/></svg>
<div class="lbl" style="left:434.5px;top:517px;font-size:12px;color:#595959;transform:scaleX(0.96);transform-origin:0 0">OPT, 1, 10%</div>
<div class="lbl" style="left:326px;top:551px;font-size:12px;color:#595959;transform:scaleX(0.96);transform-origin:0 0">EE, 0, 3%</div>
<div class="lbl" style="left:436px;top:608px;font-size:12px;color:#595959;transform:scaleX(0.96);transform-origin:0 0">ME, 2, 21%</div>
<div class="lbl" style="left:248px;top:702px;font-size:12px;color:#595959;transform:scaleX(0.96);transform-origin:0 0">ME BELT, 7, 66%</div>
<div class="a" style="left:536px;top:486px;width:414px;height:303px;border:1px solid #a6a6a6;border-radius:12px;background:#fff;"></div>
<div class="a" style="left:523px;top:501px;width:17px;height:2px;background:#217346"></div>
<div class="a" style="left:547px;top:486px;width:2px;height:4px;background:#217346"></div>
<div class="a" style="left:537px;top:627px;width:3px;height:122px;background:#a79c9c"></div>
<div class="t" style="left:757px;top:498px;font-size:13.5px;color:#595959;transform:translateX(-50%) scaleX(1.075)">By Main Downtime</div>
<div class="a" style="left:672px;top:520px;width:1px;height:256px;background:#d9d9d9"></div>
<div class="a" style="left:673px;top:523.5px;width:219px;height:15px;background:#c9e7b1"></div>
<div class="lbl" style="right:938px;top:524.5px;font-size:11px;color:#595959;transform:scaleX(0.9);transform-origin:100% 0">Trip belt rip</div>
<div class="lbl" style="left:898px;top:525.5px;font-size:11px;color:#404040">7</div>
<div class="a" style="left:673px;top:546.8px;width:43px;height:15px;background:#c9e7b1"></div>
<div class="lbl" style="right:938px;top:547.8px;font-size:11px;color:#595959;transform:scaleX(0.9);transform-origin:100% 0">เปลี่ยน Flat return</div>
<div class="lbl" style="left:722px;top:548.8px;font-size:11px;color:#404040">1</div>
<div class="a" style="left:673px;top:570.0px;width:36px;height:15px;background:#c9e7b1"></div>
<div class="lbl" style="right:938px;top:571.0px;font-size:11px;color:#595959;transform:scaleX(0.9);transform-origin:100% 0">ติดระบบไฟฟ้า</div>
<div class="lbl" style="left:715px;top:572.0px;font-size:11px;color:#404040">1</div>
<div class="a" style="left:673px;top:593.3px;width:35px;height:15px;background:#c9e7b1"></div>
<div class="lbl" style="right:938px;top:594.3px;font-size:11px;color:#595959;transform:scaleX(0.9);transform-origin:100% 0">เคลียร์ดินอัด Receiving</div>
<div class="lbl" style="left:714px;top:595.3px;font-size:11px;color:#404040">1</div>
<div class="a" style="left:673px;top:616.6px;width:34px;height:15px;background:#c9e7b1"></div>
<div class="lbl" style="right:938px;top:617.6px;font-size:11px;color:#595959;transform:scaleX(0.9);transform-origin:100% 0">ตัดยางแผลเปิด</div>
<div class="lbl" style="left:713px;top:618.6px;font-size:11px;color:#404040">1</div>
<div class="a" style="left:673px;top:639.9px;width:19px;height:15px;background:#c9e7b1"></div>
<div class="lbl" style="right:938px;top:640.9px;font-size:11px;color:#595959;transform:scaleX(0.9);transform-origin:100% 0">ตัดสลิงกลางสายพาน</div>
<div class="lbl" style="left:698px;top:641.9px;font-size:11px;color:#404040">0</div>
<div class="a" style="left:673px;top:663.1px;width:18px;height:15px;background:#c9e7b1"></div>
<div class="lbl" style="right:938px;top:664.1px;font-size:11px;color:#595959;transform:scaleX(0.9);transform-origin:100% 0">ดึง Tension</div>
<div class="lbl" style="left:697px;top:665.1px;font-size:11px;color:#404040">0</div>
<div class="a" style="left:673px;top:686.4px;width:9px;height:15px;background:#c9e7b1"></div>
<div class="lbl" style="right:938px;top:687.4px;font-size:11px;color:#595959;transform:scaleX(0.9);transform-origin:100% 0">แก้ไขผนัง Hopper</div>
<div class="lbl" style="left:688px;top:688.4px;font-size:11px;color:#404040">0</div>
<div class="a" style="left:673px;top:709.7px;width:7px;height:15px;background:#c9e7b1"></div>
<div class="lbl" style="right:938px;top:710.7px;font-size:11px;color:#595959;transform:scaleX(0.9);transform-origin:100% 0">แก้ไข Flat return</div>
<div class="lbl" style="left:686px;top:711.7px;font-size:11px;color:#404040">0</div>
<div class="a" style="left:673px;top:732.9px;width:6px;height:15px;background:#c9e7b1"></div>
<div class="lbl" style="right:938px;top:733.9px;font-size:11px;color:#595959;transform:scaleX(0.9);transform-origin:100% 0">SPD. Slew ไม่ได้</div>
<div class="lbl" style="left:685px;top:734.9px;font-size:11px;color:#404040">0</div>
<div class="a" style="left:673px;top:756.2px;width:16px;height:15px;background:#c9e7b1"></div>
<div class="lbl" style="right:938px;top:757.2px;font-size:11px;color:#595959;transform:scaleX(0.9);transform-origin:100% 0">Other</div>
<div class="lbl" style="left:695px;top:758.2px;font-size:11px;color:#404040">0</div>
<div class="a" style="left:954px;top:486px;width:579px;height:303px;border:1px solid #a6a6a6;border-radius:12px;background:#fff"></div>
<div class="a" style="left:1255px;top:487px;width:1px;height:301px;background:#a6a6a6"></div>
<div class="t" style="left:1117px;top:499px;font-size:13.5px;color:#595959;transform:translateX(-50%) scaleX(1.095)">By Equipment</div>
<div class="a" style="left:1016px;top:524px;width:1px;height:246px;background:#d9d9d9"></div>
<div class="a" style="left:1059px;top:524px;width:1px;height:246px;background:#d9d9d9"></div>
<div class="a" style="left:1104px;top:524px;width:1px;height:246px;background:#d9d9d9"></div>
<div class="a" style="left:1149px;top:524px;width:1px;height:246px;background:#d9d9d9"></div>
<div class="a" style="left:1192px;top:524px;width:1px;height:246px;background:#d9d9d9"></div>
<div class="a" style="left:1237px;top:524px;width:1px;height:246px;background:#d9d9d9"></div>
<div class="a" style="left:1016px;top:533px;width:61px;height:23px;background:#ff9999"></div>
<div class="lbl" style="right:588px;top:540px;font-size:9.5px;color:#404040">A5</div>
<div class="lbl" style="left:1085px;top:540px;font-size:9.5px;color:#262626">1</div>
<div class="a" style="left:1016px;top:574px;width:10px;height:23px;background:#ff9999"></div>
<div class="lbl" style="right:588px;top:581px;font-size:9.5px;color:#404040">A4</div>
<div class="lbl" style="left:1034px;top:581px;font-size:9.5px;color:#262626">0</div>
<div class="a" style="left:1016px;top:615.5px;width:169px;height:23px;background:#ff9999"></div>
<div class="lbl" style="right:588px;top:622.5px;font-size:9.5px;color:#404040">A3</div>
<div class="lbl" style="left:1193px;top:622.5px;font-size:9.5px;color:#262626">4</div>
<div class="a" style="left:1016px;top:656.5px;width:9px;height:23px;background:#ff9999"></div>
<div class="lbl" style="right:588px;top:663.5px;font-size:9.5px;color:#404040">A2.1</div>
<div class="lbl" style="left:1033px;top:663.5px;font-size:9.5px;color:#262626">0</div>
<div class="a" style="left:1016px;top:697.5px;width:23px;height:23px;background:#ff9999"></div>
<div class="lbl" style="right:588px;top:704.5px;font-size:9.5px;color:#404040">A2</div>
<div class="lbl" style="left:1047px;top:704.5px;font-size:9.5px;color:#262626">0</div>
<div class="a" style="left:1016px;top:738.5px;width:27px;height:23px;background:#ff9999"></div>
<div class="lbl" style="right:588px;top:745.5px;font-size:9.5px;color:#404040">A1</div>
<div class="lbl" style="left:1051px;top:745.5px;font-size:9.5px;color:#262626">0</div>
<div class="t" style="left:1395px;top:501px;font-size:13.5px;color:#595959;transform:translateX(-50%) scaleX(1.05)">By Machine</div>
<div class="a" style="left:1343px;top:522px;width:1px;height:247px;background:#d9d9d9"></div>
<div class="a" style="left:1400px;top:522px;width:1px;height:247px;background:#d9d9d9"></div>
<div class="a" style="left:1458px;top:522px;width:1px;height:247px;background:#d9d9d9"></div>
<div class="a" style="left:1516px;top:522px;width:1px;height:247px;background:#d9d9d9"></div>
<div class="a" style="left:1343px;top:532px;width:22px;height:23px;background:#4472c4"></div>
<div class="lbl" style="right:265px;top:537px;font-size:9.5px;color:#595959;transform:scaleX(0.84);transform-origin:100% 0">CRI</div>
<div class="lbl" style="left:1372px;top:537.5px;font-size:9.5px;color:#404040;transform:scaleX(0.9);transform-origin:0 0">4</div>
<div class="a" style="left:1343px;top:573px;width:17px;height:23px;background:#4472c4"></div>
<div class="lbl" style="right:265px;top:578px;font-size:9.5px;color:#595959;transform:scaleX(0.84);transform-origin:100% 0">SPD.A</div>
<div class="lbl" style="left:1367px;top:578.5px;font-size:9.5px;color:#404040;transform:scaleX(0.9);transform-origin:0 0">3</div>
<div class="a" style="left:1343px;top:614px;width:81px;height:23px;background:#4472c4"></div>
<div class="lbl" style="right:265px;top:619px;font-size:9.5px;color:#595959;transform:scaleX(0.84);transform-origin:100% 0">CR.K</div>
<div class="lbl" style="left:1431px;top:619.5px;font-size:9.5px;color:#404040;transform:scaleX(0.9);transform-origin:0 0">16</div>
<div class="a" style="left:1343px;top:655px;width:1px;height:23px;background:#4472c4"></div>
<div class="lbl" style="right:265px;top:660px;font-size:9.5px;color:#595959;transform:scaleX(0.84);transform-origin:100% 0">CRJ</div>
<div class="lbl" style="left:1351px;top:660.5px;font-size:9.5px;color:#404040;transform:scaleX(0.9);transform-origin:0 0">0</div>
<div class="a" style="left:1343px;top:696px;width:48px;height:23px;background:#4472c4"></div>
<div class="lbl" style="right:265px;top:701px;font-size:9.5px;color:#595959;transform:scaleX(0.84);transform-origin:100% 0">CR.C</div>
<div class="lbl" style="left:1398px;top:701.5px;font-size:9.5px;color:#404040;transform:scaleX(0.9);transform-origin:0 0">10</div>
<div class="a" style="left:1343px;top:737px;width:147px;height:23px;background:#4472c4"></div>
<div class="lbl" style="right:265px;top:742px;font-size:9.5px;color:#595959;transform:scaleX(0.84);transform-origin:100% 0">BWE.1</div>
<div class="lbl" style="left:1497px;top:742.5px;font-size:9.5px;color:#404040;transform:scaleX(0.9);transform-origin:0 0">30</div>
<div class="a" style="left:0;top:802px;width:1595px;height:28px;background:#e6e6e6;border-top:1px solid #a9a9a9"></div>
<svg class="a" style="left:20px;top:810px" width="40" height="12"><path d="M7 2 v8 l-4 -4z" fill="#b8b8b8"/><path d="M32 2 v8 l4 -4z" fill="#b0b0b0"/></svg>
<div class="a" style="left:96px;top:806px;width:1.5px;height:20px;background:#8f8f8f"></div>
<div class="a" style="left:99px;top:805px;width:83px;height:22px;background:#8ecbc4"></div>
<div class="t" style="left:140.5px;top:809px;font-size:13px;color:#1a1a1a;transform:translateX(-50%)">DT CR WA</div>
<div class="a" style="left:184px;top:806px;width:1.5px;height:20px;background:#8f8f8f"></div>
<div class="a" style="left:187px;top:805px;width:82px;height:22px;background:#fbb382"></div>
<div class="t" style="left:228px;top:809px;font-size:13px;color:#1a1a1a;transform:translateX(-50%)">DT CR WB</div>
<div class="a" style="left:271px;top:801px;width:243px;height:27px;background:linear-gradient(#fff 0%,#fff 15%,#c8e6e2 100%);border-left:1px solid #b0b0b0;border-right:1px solid #b0b0b0;border-bottom:2px solid #217346"></div>
<div class="t" style="left:392px;top:809px;font-size:13px;font-weight:bold;color:#217346;transform:translateX(-50%)">Downtime frequency report CV WA</div>
<div class="a" style="left:516px;top:805px;width:236px;height:22px;background:#fbb382"></div>
<div class="t" style="left:634px;top:809px;font-size:13px;color:#1a1a1a;transform:translateX(-50%)">Downtime frequency report CV WB</div>
<div class="a" style="left:753px;top:806px;width:1.5px;height:20px;background:#8f8f8f"></div>
<div class="a" style="left:757px;top:805px;width:203px;height:22px;background:#000"></div>
<div class="t" style="left:858px;top:809px;font-size:13px;color:#fff;transform:translateX(-50%)">&lt;-----|RP| SECTION |DB| -----&gt;</div>
<div class="a" style="left:962px;top:806px;width:1.5px;height:20px;background:#8f8f8f"></div>
<div class="t" style="left:977px;top:809px;font-size:13px;color:#333">Data Line A</div>
<div class="a" style="left:1057px;top:806px;width:1.5px;height:20px;background:#8f8f8f"></div>
<div class="t" style="left:1073px;top:809px;font-size:13px;color:#333">Data Line B</div>
<div class="a" style="left:1151px;top:806px;width:1.5px;height:20px;background:#8f8f8f"></div>
<svg class="a" style="left:1184px;top:807px" width="18" height="18"><circle cx="9" cy="9" r="7.5" fill="none" stroke="#6a6a6a" stroke-width="1.3"/><path d="M9 5 v8 M5 9 h8" stroke="#6a6a6a" stroke-width="1.5"/></svg>
<svg class="a" style="left:1305px;top:809px" width="3" height="13"><circle cx="1.5" cy="1.5" r="1" fill="#9a9a9a"/><circle cx="1.5" cy="6.5" r="1" fill="#9a9a9a"/><circle cx="1.5" cy="11.5" r="1" fill="#9a9a9a"/></svg>
<div class="a" style="left:1323px;top:809px;width:252px;height:15px;background:#fff;border:1px solid #c6c6c6"></div>
<div class="a" style="left:1337px;top:809px;width:1px;height:15px;background:#c6c6c6"></div>
<div class="a" style="left:1558px;top:809px;width:1px;height:15px;background:#c6c6c6"></div>
<svg class="a" style="left:1326px;top:810px" width="250" height="12"><path d="M9 2 v8 l-4 -4z" fill="#555"/><path d="M240 2 v8 l4 -4z" fill="#555"/></svg>
<div class="a" style="left:0;top:830px;width:1595px;height:21px;background:#f3f3f3;border-top:1px solid #c4c4c4"></div>
<svg class="a" style="left:0;top:830px" width="60" height="21" viewBox="0 0 60 21">
<circle cx="7" cy="7" r="2.9" fill="#505050"/><rect x="11.3" y="5.2" width="5.5" height="2.5" fill="#505050"/>
<path d="M5.6 11 v5.4 h10.8 v-9.5" stroke="#505050" stroke-width="1.1" fill="none"/>
<g fill="#505050"><rect x="10" y="9.8" width="1.8" height="1"/><rect x="13" y="9.8" width="1.8" height="1"/>
<rect x="7" y="11.9" width="1.8" height="1"/><rect x="10" y="11.9" width="1.8" height="1"/><rect x="13" y="11.9" width="1.8" height="1"/>
<rect x="7" y="14" width="1.8" height="1"/><rect x="10" y="14" width="1.8" height="1"/><rect x="13" y="14" width="1.8" height="1"/></g>
<path d="M39.5 5.6 A5.6 5.6 0 0 0 40.6 16.4" stroke="#404040" stroke-width="1.3" fill="none" stroke-dasharray="3 1.6"/>
<path d="M41.4 4 v6.2 M39.5 8.6 l1.9 1.8 l1.9 -1.8 M45.6 7.6 l1.5 1.7 l-1.5 1.7" stroke="#404040" stroke-width="1.1" fill="none"/>
<path d="M42.8 11.5 l8 7 M50.6 11.5 l-8 7" stroke="#3a3a3a" stroke-width="1.7"/>
</svg>
<div class="t" style="left:54px;top:835.7px;font-size:11.5px;color:#333">Accessibility: Investigate</div>
<div class="a" style="left:1382px;top:831px;width:40px;height:20px;background:#c8c8c8"></div>
<svg class="a" style="left:1310px;top:831px" width="285" height="20" viewBox="0 0 285 20">
<g fill="none" stroke="#5f5f5f" stroke-width="1">
<rect x="5.5" y="3.5" width="12" height="12"/><path d="M5.5 7.5 h12 M5.5 11.5 h12 M9.5 3.5 v12 M13.5 3.5 v12"/>
<rect x="45.5" y="3.5" width="12" height="12"/><rect x="47.5" y="6.5" width="8" height="6"/><path d="M49 8.5 h5 M49 10.5 h5"/>
<rect x="85.5" y="3.5" width="13" height="12"/><path d="M85.5 11.5 h8.5 v-8 M89.5 3.5 v5"/>
</g>
<path d="M117 9.5 h9" stroke="#5f5f5f" stroke-width="1.2"/>
<path d="M132 9.5 h98" stroke="#a0a0a0" stroke-width="1"/>
<rect x="171.5" y="4.5" width="4.5" height="11" fill="#6a6a6a"/><path d="M181.5 7 v5" stroke="#a0a0a0"/>
<path d="M235 9.5 h9 M239.5 5 v9" stroke="#5f5f5f" stroke-width="1.2"/>
</svg>
<div class="t" style="left:1566px;top:835px;font-size:11.5px;color:#333">85%</div>
</body></html>
